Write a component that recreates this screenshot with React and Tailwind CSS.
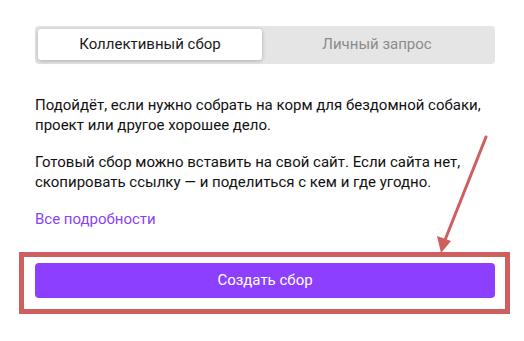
export default function App() {
  return (
    <div className="relative w-[524px] h-[341px] bg-white overflow-hidden" style={{ fontFamily: "Roboto, 'Noto Sans', sans-serif" }}>
      <div className="pt-[26px] pl-[35px] w-[495px]">
        <div className="flex h-[38px] bg-[#e5e5e5] rounded-[4px] pt-[3px] pb-[4px] px-[3px]">
          <div className="w-[224px] bg-white rounded-[3px] shadow-[0_1px_4px_rgba(0,0,0,0.25)] flex items-center justify-center text-[15px] text-[#1a1a1a]">
            Коллективный сбор
          </div>
          <div className="flex-1 flex items-center justify-center text-[15px] text-[#8c8c8c]">
            Личный запрос
          </div>
        </div>
        <div className="mt-[31px] text-[15px] leading-[20px] text-[#111]">
          <p className="mb-[17px]">Подойдёт, если нужно собрать на корм для бездомной собаки, проект или другое хорошее дело.</p>
          <p className="mb-[17px]">Готовый сбор можно вставить на свой сайт. Если сайта нет, скопировать ссылку — и поделиться с кем и где угодно.</p>
          <a className="block text-[#8a3ffc]">Все подробности</a>
        </div>
        <button className="mt-[34px] w-full h-[35px] rounded-[4px] bg-[#8c3ffe] text-white text-[15px] flex items-center justify-center">
          Создать сбор
        </button>
      </div>
      <div className="absolute left-[19px] top-[252px] w-[491px] h-[62px] border-[5px] border-[#cf5e5e]" />
      <svg className="absolute left-0 top-0" width="524" height="341" viewBox="0 0 524 341">
        <line x1="486" y1="137" x2="445" y2="240" stroke="#cf5e5e" strokeWidth="3" strokeLinecap="round" />
        <polygon points="441,253 437,236 451,241" fill="#cf5e5e" />
      </svg>
    </div>
  );
}
